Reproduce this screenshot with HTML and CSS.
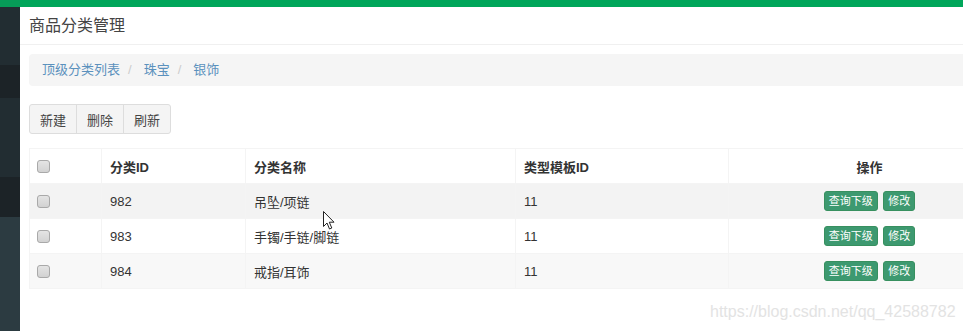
FILE: index.html
```html
<!DOCTYPE html>
<html lang="zh-CN">
<head>
    <meta charset="UTF-8">
    <meta name="viewport" content="width=device-width, initial-scale=1.0">
    <title>商品分类管理</title>
    <link rel="stylesheet" href="styles.css">
</head>
<body>
    <div class="wrapper">
        <aside class="sidebar">
            <div class="side-logo"></div>
            <div class="side-item"></div>
            <div class="side-item active"></div>
            <div class="side-item tall"></div>
            <div class="side-item active short"></div>
            <div class="side-sub"></div>
        </aside>

        <main class="main">
            <div class="topbar"></div>
            <div class="page-header">
                <h1>商品分类管理</h1>
            </div>

            <ol class="breadcrumb">
                <li><a href="#">顶级分类列表</a></li>
                <li><a href="#">珠宝</a></li>
                <li><a href="#">银饰</a></li>
            </ol>

            <div class="btn-group">
                <button class="btn">新建</button>
                <button class="btn">删除</button>
                <button class="btn">刷新</button>
            </div>

            <table class="data-table">
                <thead>
                    <tr>
                        <th class="col-check"><input type="checkbox"></th>
                        <th class="col-id">分类ID</th>
                        <th class="col-name">分类名称</th>
                        <th class="col-type">类型模板ID</th>
                        <th class="col-op">操作</th>
                    </tr>
                </thead>
                <tbody>
                    <tr class="hover">
                        <td class="col-check"><input type="checkbox"></td>
                        <td>982</td>
                        <td>吊坠/项链</td>
                        <td>11</td>
                        <td class="col-op">
                            <button class="btn-xs">查询下级</button>
                            <button class="btn-xs">修改</button>
                        </td>
                    </tr>
                    <tr>
                        <td class="col-check"><input type="checkbox"></td>
                        <td>983</td>
                        <td>手镯/手链/脚链</td>
                        <td>11</td>
                        <td class="col-op">
                            <button class="btn-xs">查询下级</button>
                            <button class="btn-xs">修改</button>
                        </td>
                    </tr>
                    <tr class="odd">
                        <td class="col-check"><input type="checkbox"></td>
                        <td>984</td>
                        <td>戒指/耳饰</td>
                        <td>11</td>
                        <td class="col-op">
                            <button class="btn-xs">查询下级</button>
                            <button class="btn-xs">修改</button>
                        </td>
                    </tr>
                </tbody>
            </table>

            <div class="watermark">https://blog.csdn.net/qq_42588782</div>

            <svg class="cursor" width="12" height="19" viewBox="0 0 12 19">
                <path d="M0.5 0.5 L0.5 15.5 L4 12 L6.5 18 L8.8 17 L6.3 11.2 L11 11.2 Z" fill="#fff" stroke="#222" stroke-width="1"/>
            </svg>
        </main>
    </div>
</body>
</html>
```

FILE: styles.css
```css
/* base */
html, body {
    margin: 0;
    padding: 0;
    height: 100%;
    overflow: hidden;
}

body {
    font-family: "Liberation Sans", "Noto Sans CJK SC", sans-serif;
    font-size: 13px;
    color: #333;
    background: #fff;
}

.wrapper {
    display: flex;
    height: 100%;
}

/* sidebar */
.sidebar {
    width: 20px;
    flex-shrink: 0;
    display: flex;
    flex-direction: column;
    background: #2c3b41;
}

.side-logo {
    height: 7px;
    background: #079b58;
}

.side-item {
    height: 58px;
    background: #222d32;
}

.side-item.active {
    height: 33px;
    background: #1c2327;
}

.side-item.tall {
    height: 79px;
}

.side-item.active.short {
    height: 40px;
}

.side-sub {
    flex: 1;
    background: #2c3b41;
}

/* main */
.main {
    flex: 1;
    position: relative;
    overflow: hidden;
    padding-left: 9px;
}

.topbar {
    height: 7px;
    margin-left: -9px;
    background: #00a65a;
}

.page-header {
    height: 37px;
    margin-left: -9px;
    padding-left: 9px;
    border-bottom: 1px solid #f0f0f0;
}

.page-header h1 {
    margin: 0;
    font-size: 16px;
    font-weight: normal;
    line-height: 37px;
    color: #444;
}

/* breadcrumb */
.breadcrumb {
    list-style: none;
    display: flex;
    margin: 9px 0 0;
    padding: 0 13px;
    height: 32px;
    line-height: 32px;
    background: #f5f5f5;
    border-radius: 4px 0 0 4px;
}

.breadcrumb li + li:before {
    content: "/";
    color: #ccc;
    margin: 0 12px 0 8px;
}

.breadcrumb a {
    color: #5b91bd;
    text-decoration: none;
}

/* toolbar */
.btn-group {
    display: flex;
    margin-top: 18px;
}

.btn {
    height: 30px;
    width: 48px;
    padding: 0;
    font-family: inherit;
    font-size: 13px;
    color: #444;
    background: #f4f4f4;
    border: 1px solid #ddd;
    margin-left: -1px;
    cursor: pointer;
}

.btn:first-child {
    margin-left: 0;
    border-radius: 3px 0 0 3px;
}

.btn:last-child {
    border-radius: 0 3px 3px 0;
}

/* table */
.data-table {
    margin-top: 14px;
    width: 981px;
    border-collapse: collapse;
    table-layout: fixed;
    border: 1px solid #f4f4f4;
}

.data-table th,
.data-table td {
    height: 35px;
    box-sizing: border-box;
    padding: 0 8px;
    text-align: left;
    border: 1px solid #f4f4f4;
    color: #333;
}

.data-table th {
    font-weight: bold;
}

.data-table tr.hover td {
    background: #f3f3f3;
}

.data-table tr.odd td {
    background: #f8f8f8;
}

.col-check { width: 72px; }
.col-id { width: 144px; }
.col-name { width: 270px; }
.col-type { width: 213px; }
.data-table .col-op {
    width: 282px;
    text-align: center;
}

.data-table input[type="checkbox"] {
    appearance: none;
    -webkit-appearance: none;
    display: block;
    width: 13px;
    height: 13px;
    margin: 0 0 0 -1px;
    border: 1px solid #a9a9a9;
    border-radius: 3px;
    background: linear-gradient(#e4e4e4, #d2d2d2);
    box-sizing: border-box;
}

.btn-xs {
    height: 20px;
    padding: 0 4px;
    font-family: inherit;
    font-size: 11px;
    line-height: 18px;
    color: #fff;
    background: #3d9970;
    border: 1px solid #37905f;
    border-radius: 3px;
    margin: 0 1px;
    cursor: pointer;
}

/* overlays */
.watermark {
    position: absolute;
    left: 690px;
    top: 303px;
    font-family: "Liberation Sans", sans-serif;
    font-size: 16px;
    color: #e3e3e3;
}

.cursor {
    position: absolute;
    left: 303px;
    top: 211px;
}
```
